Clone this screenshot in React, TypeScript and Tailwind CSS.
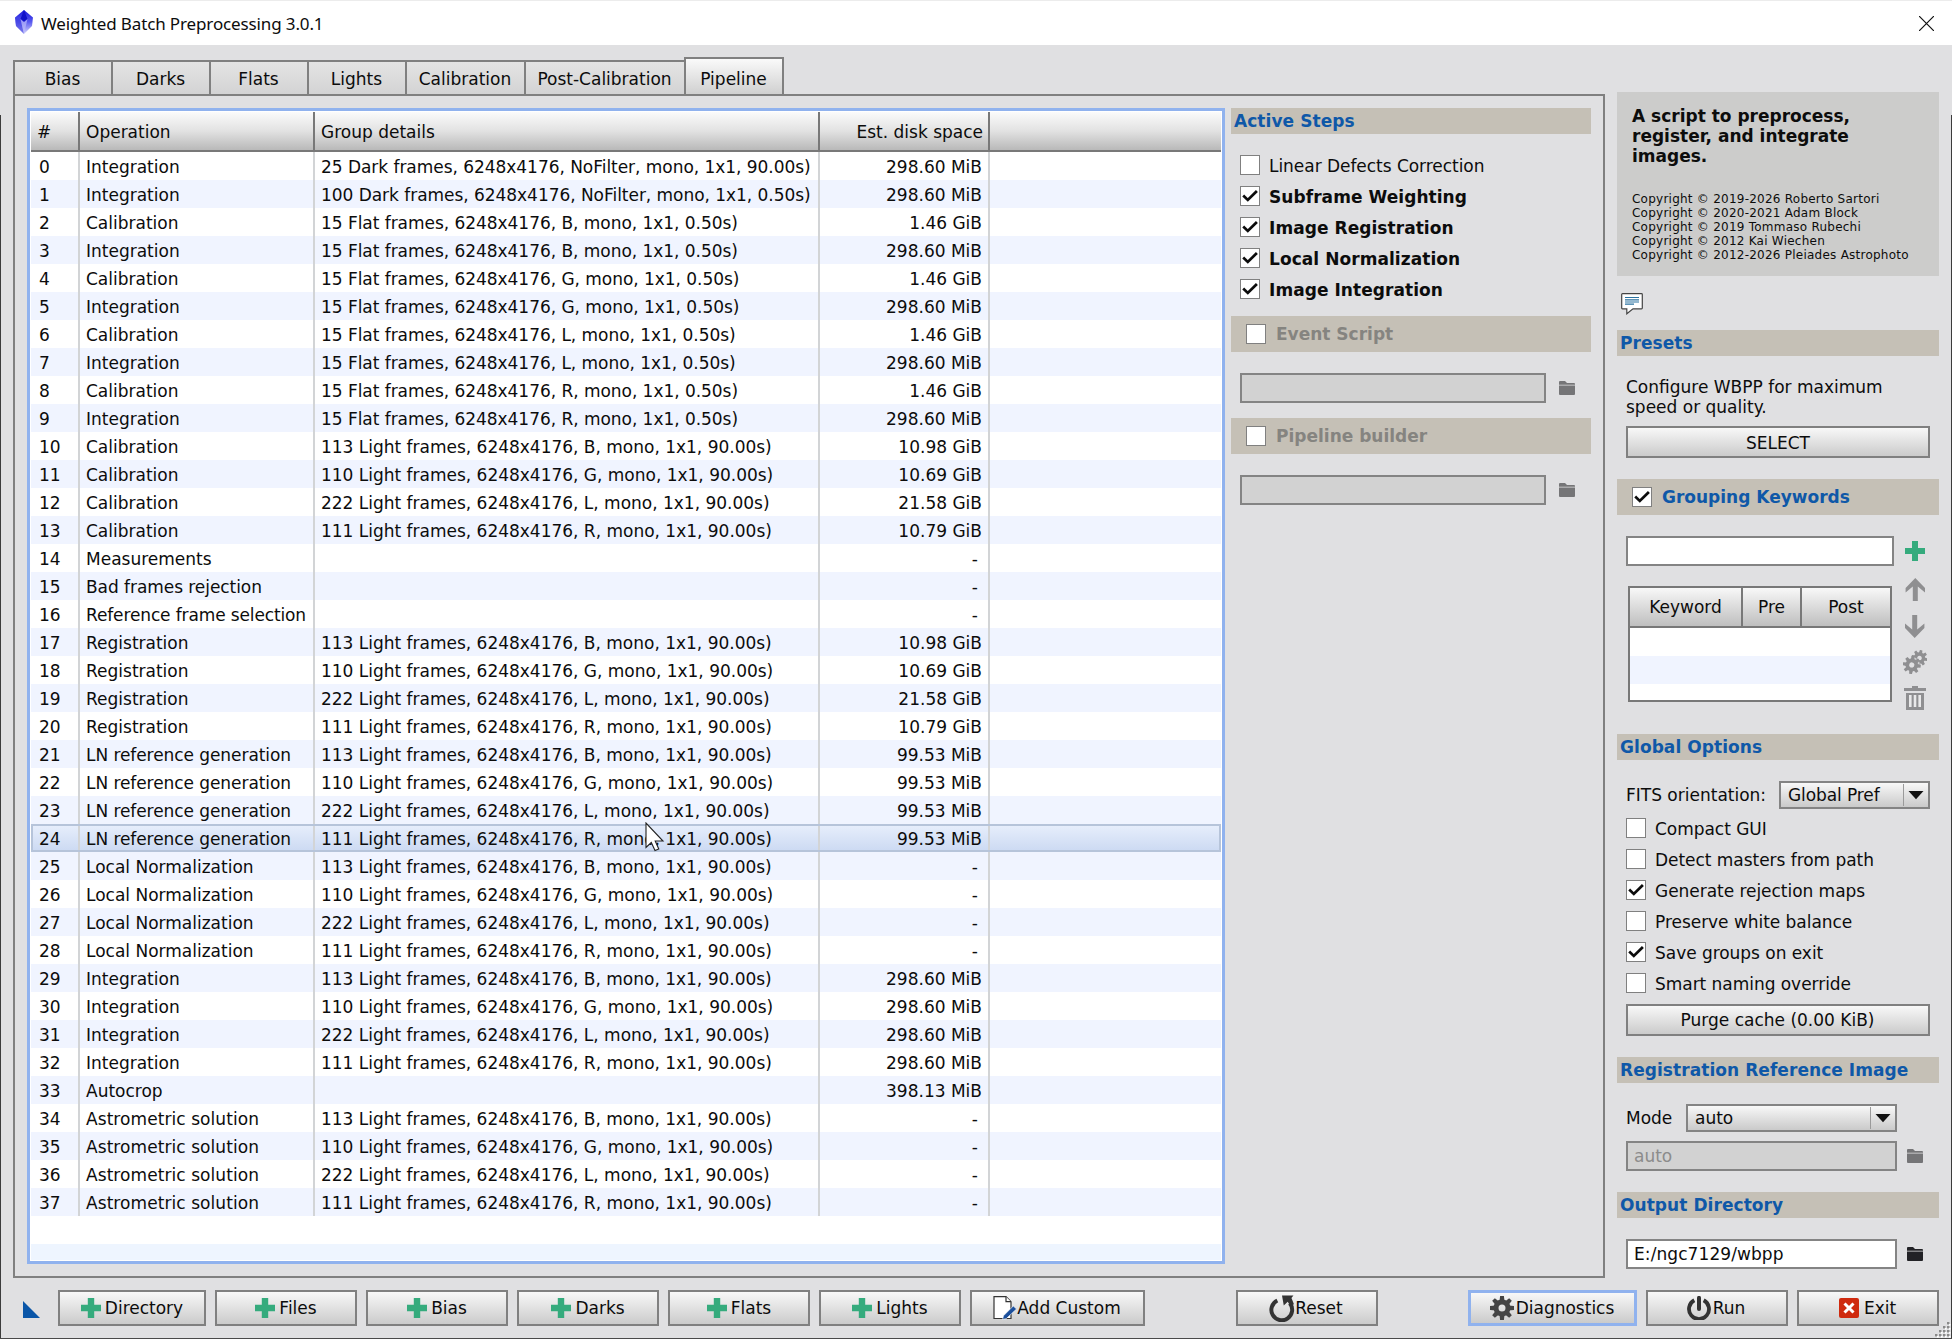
import React from "react";

const B = ["B", "G", "L", "R"];
const LIGHT_COUNT: Record<string, string> = { B: "113", G: "110", L: "222", R: "111" };
const light = (f: string) => `${LIGHT_COUNT[f]} Light frames, 6248x4176, ${f}, mono, 1x1, 90.00s)`;
const SIZES: Record<string, string> = { B: "10.98 GiB", G: "10.69 GiB", L: "21.58 GiB", R: "10.79 GiB" };

type Row = [string, string, string];
const rows: Row[] = [
  ["Integration", "25 Dark frames, 6248x4176, NoFilter, mono, 1x1, 90.00s)", "298.60 MiB"],
  ["Integration", "100 Dark frames, 6248x4176, NoFilter, mono, 1x1, 0.50s)", "298.60 MiB"],
  ...B.flatMap((f): Row[] => [
    ["Calibration", `15 Flat frames, 6248x4176, ${f}, mono, 1x1, 0.50s)`, "1.46 GiB"],
    ["Integration", `15 Flat frames, 6248x4176, ${f}, mono, 1x1, 0.50s)`, "298.60 MiB"],
  ]),
  ...B.map((f): Row => ["Calibration", light(f), SIZES[f]]),
  ["Measurements", "", "-"],
  ["Bad frames rejection", "", "-"],
  ["Reference frame selection", "", "-"],
  ...B.map((f): Row => ["Registration", light(f), SIZES[f]]),
  ...B.map((f): Row => ["LN reference generation", light(f), "99.53 MiB"]),
  ...B.map((f): Row => ["Local Normalization", light(f), "-"]),
  ...B.map((f): Row => ["Integration", light(f), "298.60 MiB"]),
  ["Autocrop", "", "398.13 MiB"],
  ...B.map((f): Row => ["Astrometric solution", light(f), "-"]),
];

const OP_TRACKING: Record<string, string> = {
  "Reference frame selection": "tracking-[-0.13px]",
  "LN reference generation": "tracking-[-0.07px]",
  "Bad frames rejection": "tracking-[-0.06px]",
  "Astrometric solution": "tracking-[0.07px]",
};

const SELECTED = 24;

function Check({ on }: { on?: boolean }) {
  return (
    <span className="block h-5 w-5 shrink-0 border-[1.5px] border-[#808080] bg-white">
      {on && (
        <svg viewBox="0 0 18 18" className="block h-full w-full">
          <path d="M2.2 8.6 L6.8 12.9 L15.9 4" fill="none" stroke="#0c0c0c" strokeWidth="2.7" />
        </svg>
      )}
    </span>
  );
}

function CheckRow({ label, on, bold }: { label: string; on?: boolean; bold?: boolean }) {
  return (
    <div className="flex h-[31px] items-start gap-[9px]">
      <Check on={on} />
      <span className={bold ? "mt-px font-bold leading-5 tracking-[0.06px]" : "mt-px leading-5 tracking-[-0.04px]"}>
        {label}
      </span>
    </div>
  );
}

function Bar({ children, className = "" }: { children: React.ReactNode; className?: string }) {
  return (
    <div
      className={`h-[26px] shrink-0 bg-[#c5c0b6] pl-[3px] font-bold leading-[26px] tracking-[0.06px] text-[#0f58a8] ${className}`}
    >
      {children}
    </div>
  );
}

function CheckBar({ label, on, className = "" }: { label: string; on?: boolean; className?: string }) {
  return (
    <div className={`flex h-9 shrink-0 items-center gap-[10px] bg-[#c5c0b6] pl-[15px] font-bold ${className}`}>
      <Check on={on} />
      <span className={on ? "text-[#0f58a8]" : "text-[#858480]"}>{label}</span>
    </div>
  );
}

function Field({ children, disabled, className = "" }: { children?: React.ReactNode; disabled?: boolean; className?: string }) {
  return (
    <div
      className={`h-[30px] border-2 border-[#848484] pl-1.5 leading-[26px] ${
        disabled ? "bg-[#d2d2d2] text-[#8c8c8c]" : "bg-white"
      } ${className}`}
    >
      {children}
    </div>
  );
}

function Folder({ className = "" }: { className?: string }) {
  return (
    <svg viewBox="0 0 16 14" className={`h-[14px] w-4 shrink-0 ${className}`}>
      <path d="M0 3.8V1Q0 0 1 0H6L8 2H15Q16 2 16 3V3.8Z" fill="currentColor" />
      <path d="M0 4.6H16V13Q16 14 15 14H1Q0 14 0 13Z" fill="currentColor" />
    </svg>
  );
}

function Combo({ label, className = "" }: { label: string; className?: string }) {
  return (
    <div
      className={`flex h-7 items-center border-2 border-[#848484] bg-gradient-to-b from-[#f8f8f8] to-[#cacaca] pl-[7px] ${className}`}
    >
      <span className="flex-1 leading-6">{label}</span>
      <span className="h-[22px] w-[1.5px] bg-[#9a9a9a]" />
      <svg viewBox="0 0 24 24" className="h-6 w-6">
        <path d="M4.5 8H19.5L12 16.3Z" fill="#111" />
      </svg>
    </div>
  );
}

function Plus({ className = "" }: { className?: string }) {
  return (
    <svg viewBox="0 0 20 20" className={`h-5 w-5 shrink-0 ${className}`}>
      <path d="M7 0H13V7H20V13H13V20H7V13H0V7H7Z" fill="#35ab7d" />
    </svg>
  );
}

function BigPlus() {
  return (
    <svg viewBox="0 0 20 20" className="mr-[4px] h-5 w-5 shrink-0">
      <path d="M6.8 0H13.2V6.8H20V13.2H13.2V20H6.8V13.2H0V6.8H6.8Z" fill="#35ab7d" />
    </svg>
  );
}

function GearShape({ cx, cy, r, color, start = 0 }: { cx: number; cy: number; r: number; color: string; start?: number }) {
  return (
    <g transform={`translate(${cx} ${cy}) rotate(${start}) scale(${r / 12})`} fill={color}>
      {[0, 45, 90, 135].map((a) => (
        <path key={a} transform={`rotate(${a})`} d="M-2.6 -6L-1.9 -12H1.9L2.6 -6V-4H-2.6ZM-2.6 6L-1.9 12H1.9L2.6 6V4H-2.6Z" />
      ))}
      <circle r="6" fill="none" stroke={color} strokeWidth="5" />
    </g>
  );
}

function PushButton({
  icon,
  label,
  className = "",
  focused,
}: {
  icon?: React.ReactNode;
  label: string;
  className?: string;
  focused?: boolean;
}) {
  return (
    <div
      className={`flex shrink-0 items-center justify-center whitespace-nowrap bg-gradient-to-b from-[#f8f8f8] to-[#cbcbcb] ${
        focused ? "border-[3px] border-[#90b2ee]" : "border-2 border-[#808080]"
      } ${className}`}
    >
      {icon}
      <span>{label}</span>
    </div>
  );
}

const tabs: [string, string][] = [
  ["Bias", "w-[98px]"],
  ["Darks", "w-[98px]"],
  ["Flats", "w-[98px]"],
  ["Lights", "w-[98px]"],
  ["Calibration", "w-[119px]"],
  ["Post-Calibration", "w-[158px]"],
];

function TabStrip() {
  return (
    <div className="flex h-[39px] items-end">
      <div className="flex h-[34px] border-l-2 border-t-2 border-[#808080]">
        {tabs.map(([name, w], i) => (
          <div
            key={name}
            className={`${w} flex items-center justify-center bg-gradient-to-b from-[#e4e4e4] to-[#d3d3d4] pr-px pt-px ${
              i < 5 ? "border-r-2 border-[#808080]" : ""
            }`}
          >
            {name}
          </div>
        ))}
      </div>
      <div className="flex h-[37px] w-[100px] items-center justify-center border-x-2 border-t-2 border-[#808080] bg-gradient-to-b from-[#fafafa] to-[#d0d0d0] pr-px pt-1">
        Pipeline
      </div>
    </div>
  );
}

const GRID = "grid grid-cols-[49px_235px_505px_170px_1fr]";

function PipelineTable() {
  return (
    <div className="flex h-[1156px] w-[1198px] shrink-0 flex-col overflow-hidden border-[3px] border-[#90b2ee] bg-white p-px">
      <div
        className={`${GRID} h-10 shrink-0 border-b-2 border-[#787878] bg-gradient-to-b from-[#fbfbfb] via-[#e2e2e2] to-[#b9b9b9] leading-[40px] *:h-[38px] *:border-r-2 *:border-[#787878]`}
      >
        <span className="pl-[6px]">#</span>
        <span className="pl-[6px]">Operation</span>
        <span className="pl-[6px]">Group details</span>
        <span className="pr-[5px] text-right">Est. disk space</span>
      </div>
      {rows.map(([op, details, size], i) => (
        <div
          key={i}
          className={`${GRID} relative h-7 shrink-0 whitespace-nowrap leading-[30px] *:h-7 *:border-r-2 *:border-[#d2d4d6] ${
            i === SELECTED
              ? "bg-gradient-to-b from-[#e8effc] to-[#cbd9f2] before:pointer-events-none before:absolute before:inset-0 before:border-2 before:border-[#b6c4da]"
              : i % 2
                ? "bg-[#f0f4ff]"
                : "bg-white"
          }`}
        >
          <span className="pl-2">{i}</span>
          <span className={`pl-[6px] ${OP_TRACKING[op] ?? ""}`}>{op}</span>
          <span className={i < 10 ? "pl-[6px] tracking-[-0.04px]" : "pl-[6px] tracking-[-0.01px]"}>{details}</span>
          <span className={size === "-" ? "pr-[10px] text-right" : "pr-[6px] text-right"}>{size}</span>
        </div>
      ))}
      <div className="h-7 shrink-0 bg-white" />
      <div className="flex-1 bg-[#eef5ff]" />
    </div>
  );
}

function ActiveSteps() {
  return (
    <div className="ml-1.5 flex w-[360px] flex-col">
      <Bar>Active Steps</Bar>
      <div className="ml-[9px] mt-[21px] h-[161px]">
        <CheckRow label="Linear Defects Correction" />
        <CheckRow label="Subframe Weighting" on bold />
        <CheckRow label="Image Registration" on bold />
        <CheckRow label="Local Normalization" on bold />
        <CheckRow label="Image Integration" on bold />
      </div>
      <CheckBar label="Event Script" />
      <div className="mb-[15px] ml-[9px] mt-[21px] flex items-center gap-[13px] text-[#757577]">
        <Field disabled className="w-[306px]" />
        <Folder />
      </div>
      <CheckBar label="Pipeline builder" />
      <div className="ml-[9px] mt-[21px] flex items-center gap-[13px] text-[#757577]">
        <Field disabled className="w-[306px]" />
        <Folder />
      </div>
    </div>
  );
}

function KeywordTools() {
  return (
    <div className="flex w-6 flex-col items-center text-[#8f8f91]">
      <svg viewBox="0 0 20 23" className="h-[23px] w-5">
        <path d="M10.3 0L20 10V14.5L12.8 8.5V23H7.8V8.5L.6 14.5V10Z" fill="currentColor" />
      </svg>
      <svg viewBox="0 0 20 23" className="mt-[14px] h-[23px] w-5">
        <path d="M9.7 23L0 13V8.5L7.2 14.5V0H12.2V14.5L19.4 8.5V13Z" fill="currentColor" />
      </svg>
      <svg viewBox="0 0 24 24" className="mt-3 h-6 w-6">
        <GearShape cx={16.5} cy={8} r={8} color="#8f8f91" start={12} />
        <circle cx="8.8" cy="15" r="8" fill="#e0e0e2" fillOpacity=".8" />
        <GearShape cx={8.8} cy={15} r={9} color="#8f8f91" start={8} />
      </svg>
      <svg viewBox="0 0 22 24" className="mt-3 h-6 w-[22px]">
        <path d="M8 2V0H14V2H22V5H0V2Z" fill="currentColor" />
        <path d="M2 7H20V24H2Z" fill="currentColor" />
        <path d="M5 9H7.6V21H5ZM9.7 9H12.3V21H9.7ZM14.4 9H17V21H14.4Z" fill="#e9e9ea" />
      </svg>
    </div>
  );
}

function Sidebar() {
  return (
    <div className="ml-3 mt-[47px] flex w-[322px] shrink-0 flex-col">
      <div className="h-[184px] bg-[#cccccb] pl-[15px] pt-[14px]">
        <p className="font-bold leading-5">
          A script to preprocess,
          <br />
          register, and integrate
          <br />
          images.
        </p>
        <p className="mt-[26px] whitespace-nowrap text-[12px] leading-[14px] tracking-[0.24px]">
          Copyright © 2019-2026 Roberto Sartori
          <br />
          Copyright © 2020-2021 Adam Block
          <br />
          Copyright © 2019 Tommaso Rubechi
          <br />
          Copyright © 2012 Kai Wiechen
          <br />
          Copyright © 2012-2026 Pleiades Astrophoto
        </p>
      </div>
      <svg viewBox="0 0 22 22" className="ml-1 mt-[17px] h-[22px] w-[22px]">
        <path
          d="M1.5 .7H20.5Q21.3 .7 21.3 1.5V15Q21.3 15.8 20.5 15.8H12L5.8 20.8V15.8H1.5Q.7 15.8 .7 15V1.5Q.7 .7 1.5 .7Z"
          fill="#fff"
          stroke="#444"
          strokeWidth="1.2"
        />
        <path d="M4 4.5H18M4 6.8H18M4 9H18M4 11.2H13" stroke="#2a72a0" strokeWidth="1.2" />
      </svg>
      <Bar className="mt-[15px]">Presets</Bar>
      <p className="ml-[9px] mt-[21px] leading-5">
        Configure WBPP for maximum
        <br />
        speed or quality.
      </p>
      <PushButton label="SELECT" className="ml-[9px] mt-[9px] h-8 w-[304px] pt-px" />
      <CheckBar label="Grouping Keywords" on className="mt-[21px]" />
      <div className="ml-[9px] mt-[21px] flex items-center gap-[11px]">
        <Field className="w-[268px]" />
        <Plus />
      </div>
      <div className="ml-[11px] mt-3 flex h-[132px] gap-[11px]">
        <div className="mt-2 h-[116px] w-[264px] border-2 border-[#787878] bg-white">
          <div className="grid h-10 grid-cols-[113px_59px_1fr] border-b-2 border-[#787878] bg-gradient-to-b from-[#f8f8f8] to-[#bfbfbf] text-center leading-[39px] *:h-[38px]">
            <span className="border-r-2 border-[#787878]">Keyword</span>
            <span className="border-r-2 border-[#787878]">Pre</span>
            <span>Post</span>
          </div>
          <div className="mt-7 h-7 bg-[#f0f4ff]" />
        </div>
        <KeywordTools />
      </div>
      <Bar className="mt-6">Global Options</Bar>
      <div className="ml-[9px] mt-[21px] flex w-[304px] items-center justify-between">
        <span>FITS orientation:</span>
        <Combo label="Global Pref" className="w-[151px] tracking-[-0.1px]" />
      </div>
      <div className="ml-[9px] mt-[9px]">
        <CheckRow label="Compact GUI" />
        <CheckRow label="Detect masters from path" />
        <CheckRow label="Generate rejection maps" on />
        <CheckRow label="Preserve white balance" />
        <CheckRow label="Save groups on exit" on />
        <CheckRow label="Smart naming override" />
      </div>
      <PushButton label="Purge cache (0.00 KiB)" className="ml-[9px] h-8 w-[304px] pr-px" />
      <Bar className="mt-[21px]">Registration Reference Image</Bar>
      <div className="ml-[9px] mt-[21px] flex w-[271px] items-center justify-between">
        <span>Mode</span>
        <Combo label="auto" className="w-[211px]" />
      </div>
      <div className="ml-[9px] mt-[9px] flex items-center gap-[10px]">
        <Field disabled className="w-[271px]">
          auto
        </Field>
        <Folder className="text-[#757577]" />
      </div>
      <Bar className="mt-[21px]">Output Directory</Bar>
      <div className="ml-[9px] mt-[21px] flex items-center gap-[10px]">
        <Field className="w-[271px] tracking-[0.08px]">E:/ngc7129/wbpp</Field>
        <Folder className="text-[#222226]" />
      </div>
    </div>
  );
}

function BottomBar() {
  return (
    <div className="flex h-9 items-center pl-[23px]">
      <svg viewBox="0 0 17 17" className="mr-[18px] mt-0.5 h-[17px] w-[17px] shrink-0">
        <path d="M0 0L17 17H0Z" fill="#0a56a8" />
      </svg>
      <div className="flex gap-[9px]">
        <PushButton icon={<BigPlus />} label="Directory" className="h-9 w-[148px]" />
        <PushButton icon={<BigPlus />} label="Files" className="h-9 w-[142px]" />
        <PushButton icon={<BigPlus />} label="Bias" className="h-9 w-[142px]" />
        <PushButton icon={<BigPlus />} label="Darks" className="h-9 w-[142px]" />
        <PushButton icon={<BigPlus />} label="Flats" className="h-9 w-[142px]" />
        <PushButton icon={<BigPlus />} label="Lights" className="h-9 w-[142px]" />
        <PushButton
          icon={
            <svg viewBox="0 0 24 24" className="h-6 w-6">
              <path d="M1 .7H13L18 5.7V22.5H1Z" fill="#fff" stroke="#333" strokeWidth="1.2" />
              <path d="M13 .7V5.7H18" fill="#fff" stroke="#333" strokeWidth="1.2" />
              <path d="M9.5 23.5L10.5 19.8L20.3 10L23.5 13L13.3 22.6Z" fill="#1b4f9c" stroke="#fff" strokeWidth=".6" />
            </svg>
          }
          label="Add Custom"
          className="h-9 w-[175px] pr-px"
        />
      </div>
      <PushButton
        icon={
          <svg viewBox="0 0 25 25" className="h-[27px] w-[26px]">
            <path d="M8 4.8A10 10 0 1 0 20 7.5" fill="none" stroke="#333" strokeWidth="3.8" />
            <path d="M12.5 0H23.5L21.6 2.4L24 8.5L20.5 10L18 6L14.2 9.5Z" fill="#333" />
          </svg>
        }
        label="Reset"
        className="ml-[91px] h-9 w-[142px] pr-0.5"
      />
      <div className="ml-[90px] flex gap-[9px]">
        <PushButton
          focused
          icon={
            <svg viewBox="0 0 24 24" className="mr-0.5 h-6 w-6">
              <GearShape cx={12} cy={12} r={12} color="#444" />
            </svg>
          }
          label="Diagnostics"
          className="h-9 w-[169px] pr-px"
        />
        <PushButton
          icon={
            <svg viewBox="0 0 24 24" className="mr-0.5 h-6 w-6">
              <path d="M7.3 4.2A10 10 0 1 0 16.7 4.2" fill="none" stroke="#333" strokeWidth="3.8" />
              <path d="M12 1.8V13" stroke="#333" strokeWidth="4" strokeLinecap="round" />
            </svg>
          }
          label="Run"
          className="h-9 w-[142px] pr-0.5"
        />
        <PushButton
          icon={
            <svg viewBox="0 0 20 20" className="mr-[5px] h-5 w-5">
              <rect width="20" height="20" rx="2" fill="#cf2a0e" />
              <path d="M5.5 5.5L14.5 14.5M14.5 5.5L5.5 14.5" stroke="#fff" strokeWidth="3" />
            </svg>
          }
          label="Exit"
          className="h-9 w-[142px] pr-px"
        />
      </div>
    </div>
  );
}

export default function App() {
  return (
    <div className="relative flex h-[1339px] w-[1952px] flex-col overflow-hidden bg-[#e0e0e2] font-['DejaVu_Sans',sans-serif] text-[17px] leading-5 text-[#0c0c0c]">
      <header className="flex h-[45px] shrink-0 items-center border-t border-[#ececec] bg-white pl-[14px] pr-[18px]">
        <svg viewBox="0 0 20 24" className="mb-0.5 h-6 w-5">
          <defs>
            <linearGradient id="gem" x1="0" y1="0" x2="0" y2="1">
              <stop offset="0" stopColor="#1414d8" />
              <stop offset=".5" stopColor="#5a5af0" />
              <stop offset="1" stopColor="#d8d8fc" />
            </linearGradient>
          </defs>
          <path d="M10 0L19 7.5L18 16L10 24L2 16L1 7.5Z" fill="url(#gem)" />
          <path d="M10 0L13.5 9L10 12L6.5 9Z" fill="#1010c8" />
          <path d="M1 7.5L6.5 9L10 24L2 16Z" fill="#3c3ce0" fillOpacity=".6" />
          <path d="M10 12L13.5 9L10 24L6.5 9Z" fill="#b9b9fa" fillOpacity=".7" />
        </svg>
        <span className="ml-[7px] flex-1 pt-px font-['Noto_Sans',sans-serif] text-[17px] tracking-[-0.13px]">
          Weighted Batch Preprocessing 3.0.1
        </span>
        <svg viewBox="0 0 15 15" className="h-[15px] w-[15px]">
          <path d="M0 0L15 15M15 0L0 15" stroke="#111" strokeWidth="1.2" />
        </svg>
      </header>
      <div className="flex h-[1233px] shrink-0 pl-[13px]">
        <main className="flex w-[1592px] shrink-0 flex-col pt-[10px]">
          <TabStrip />
          <section className="flex flex-1 border-2 border-[#808080] pl-3 pt-3">
            <PipelineTable />
            <ActiveSteps />
          </section>
        </main>
        <Sidebar />
      </div>
      <footer className="mt-3">
        <BottomBar />
      </footer>

      <svg viewBox="0 0 24 34" className="absolute left-[645px] top-[822px] h-[34px] w-6">
        <path d="M1 1V25.5L6.3 20.5L10 28.5L13.8 27L10.2 19H18Z" fill="#fff" stroke="#222" strokeWidth="1.1" />
      </svg>
      <div className="absolute bottom-0 left-0 top-[115px] w-px bg-[#3c3c3c]" />
      <div className="absolute bottom-0 right-0 top-[115px] w-px bg-[#3c3c3c]" />
      <div className="absolute bottom-0 left-0 h-px w-full bg-[#4a4a4a]" />
      <svg viewBox="0 0 16 16" className="absolute bottom-px right-px h-4 w-4">
        {[0, 1, 2, 3].flatMap((r) =>
          Array.from({ length: r + 1 }, (_, c) => (
            <g key={`${r}-${c}`}>
              <rect x={12 - c * 4} y={r * 4} width="2.4" height="2.4" fill="#8a8a8a" />
              <rect x={14 - c * 4} y={r * 4 + 2} width="1.6" height="1.6" fill="#fff" />
            </g>
          )),
        )}
      </svg>
    </div>
  );
}
